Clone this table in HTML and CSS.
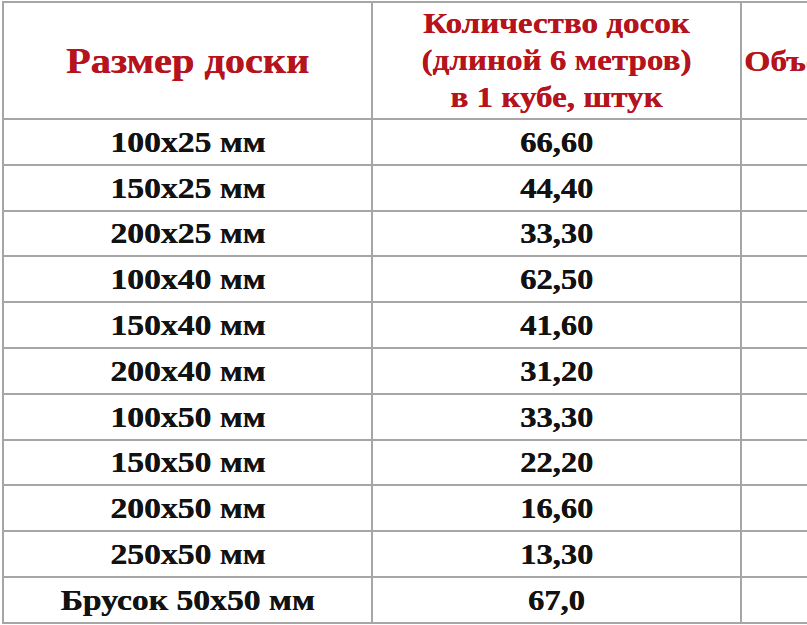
FILE: index.html
```html
<!DOCTYPE html>
<html lang="ru">
<head>
<meta charset="utf-8">
<link rel="stylesheet" href="styles.css">
</head>
<body>
<table class="grid">
  <colgroup>
    <col class="c1"><col class="c2"><col class="c3">
  </colgroup>
  <thead>
    <tr class="head">
      <th class="h1"><span class="t">Размер доски</span></th>
      <th class="h2"><span class="t">Количество досок<br>(длиной 6 метров)<br>в 1 кубе, штук</span></th>
      <th class="h3"><span class="t">Объем 1 доски</span></th>
    </tr>
  </thead>
  <tbody>
    <tr><td class="size"><span class="t">100x25 мм</span></td><td><span class="t">66,60</span></td><td></td></tr>
    <tr><td class="size"><span class="t">150x25 мм</span></td><td><span class="t">44,40</span></td><td></td></tr>
    <tr><td class="size"><span class="t">200x25 мм</span></td><td><span class="t">33,30</span></td><td></td></tr>
    <tr><td class="size"><span class="t">100x40 мм</span></td><td><span class="t">62,50</span></td><td></td></tr>
    <tr><td class="size"><span class="t">150x40 мм</span></td><td><span class="t">41,60</span></td><td></td></tr>
    <tr><td class="size"><span class="t">200x40 мм</span></td><td><span class="t">31,20</span></td><td></td></tr>
    <tr><td class="size"><span class="t">100x50 мм</span></td><td><span class="t">33,30</span></td><td></td></tr>
    <tr><td class="size"><span class="t">150x50 мм</span></td><td><span class="t">22,20</span></td><td></td></tr>
    <tr><td class="size"><span class="t">200x50 мм</span></td><td><span class="t">16,60</span></td><td></td></tr>
    <tr><td class="size"><span class="t">250x50 мм</span></td><td><span class="t">13,30</span></td><td></td></tr>
    <tr><td class="size"><span class="t">Брусок 50x50 мм</span></td><td><span class="t">67,0</span></td><td></td></tr>
  </tbody>
</table>
</body>
</html>
```
FILE: styles.css
```css
html, body {
  margin: 0;
  padding: 0;
  background: #ffffff;
  overflow: hidden;
  width: 807px;
  height: 625px;
}

.grid {
  margin: 1px 0 0 2px;
  border-collapse: collapse;
  table-layout: fixed;
  width: 1040px;
  font-family: "Liberation Serif", "Times New Roman", serif;
  font-weight: bold;
  color: #121212;
}

.c1 { width: 369px; }
.c2 { width: 369px; }
.c3 { width: 300px; }

.grid th,
.grid td {
  border: 2px solid #a6a6a6;
  padding: 0;
  text-align: center;
  vertical-align: middle;
  text-shadow: 0.35px 0 0 currentColor;
}

.head th {
  height: 115px;
  color: #b5141d;
  font-weight: bold;
}

.h1 { font-size: 36px; }

.h2 {
  font-size: 29px;
  line-height: 37px;
}

.h2 .t {
  transform: scaleX(1.14);
}

.h3 {
  font-size: 30px;
  text-align: left !important;
  padding-left: 2px !important;
  overflow: hidden;
}

.grid td {
  height: 43.8px;
  font-size: 29px;
  line-height: 30px;
}

.t {
  display: inline-block;
  transform: scaleX(1.12);
  white-space: nowrap;
}

.grid td.size .t {
  transform: scaleX(1.16);
}

.h3 .t {
  transform-origin: left center;
}
```
